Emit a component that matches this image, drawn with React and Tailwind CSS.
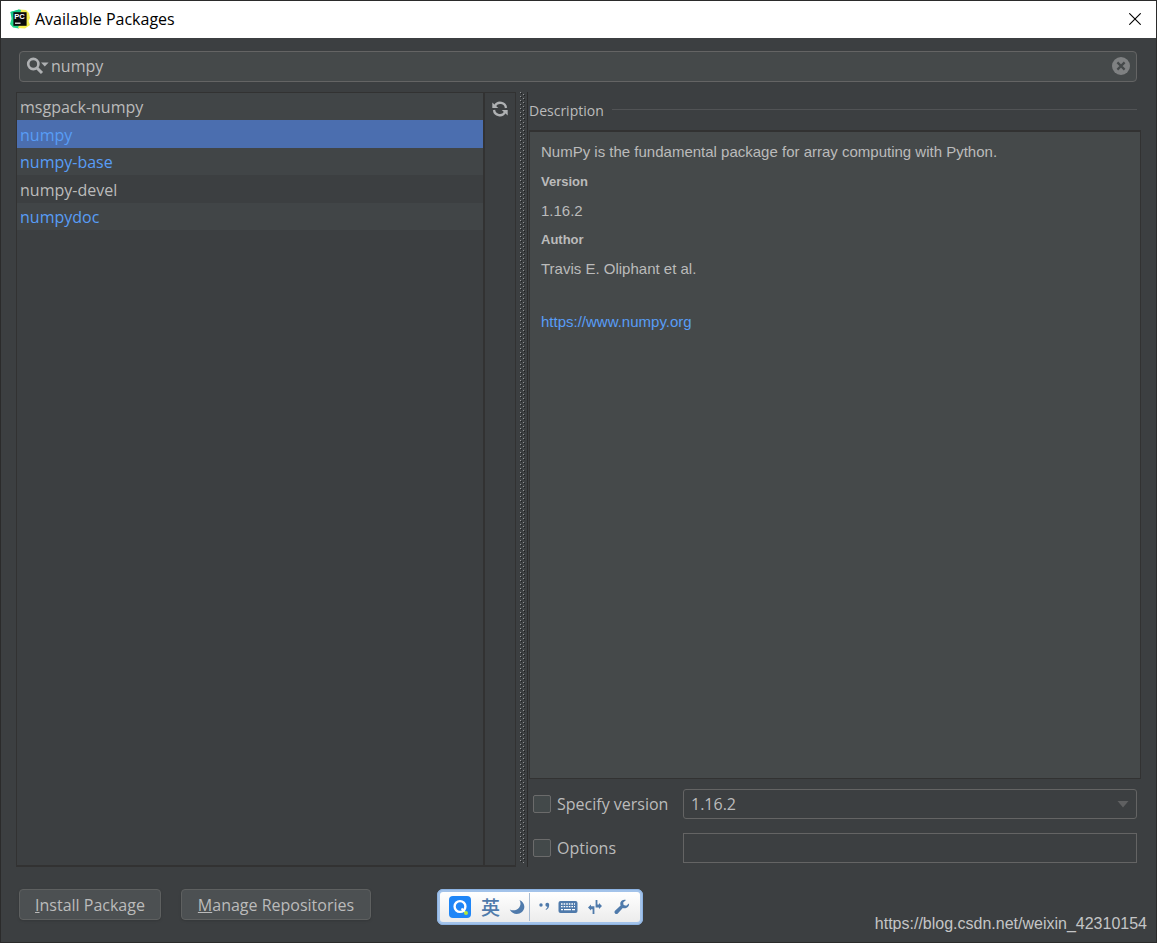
import { useState } from "react";

const packages = [
  { name: "msgpack-numpy", installed: false },
  { name: "numpy", installed: true },
  { name: "numpy-base", installed: true },
  { name: "numpy-devel", installed: false },
  { name: "numpydoc", installed: true },
];

function PyCharmIcon() {
  return (
    <svg viewBox="0 0 20 20" className="size-5 shrink-0" aria-hidden="true">
      <path d="M0.5 3 L9 0.5 L12 10 L9 19.5 L3 18.5 L0 15 L1.5 10 Z" fill="#21d789" />
      <path d="M9 0.5 L16 1 L19 4 L20 9 L18.5 12 L20 16 L15 19.5 L8 19 L12 8 Z" fill="#f3ee4f" />
      <path d="M0.5 3 L9 0.5 L11 1 L10 5 L2 8 Z" fill="#14c78a" />
      <rect x="3.4" y="3.2" width="13.2" height="13.6" fill="#0a0a0a" />
      <text x="4.2" y="10" fontSize="7.6" fontWeight="700" fontFamily="Liberation Sans, sans-serif" fill="#fff">PC</text>
      <rect x="5" y="13.6" width="5.5" height="1.2" fill="#fff" />
    </svg>
  );
}

function RefreshIcon() {
  return (
    <svg viewBox="0 0 16 16" className="size-4" fill="none" stroke="#afb1b3" strokeWidth="2.3" aria-hidden="true">
      <path d="M3 4.8 A5.9 5.9 0 0 1 14 7" />
      <path d="M13 11.2 A5.9 5.9 0 0 1 2 9" />
      <path d="M0.3 1.4 V7 H6.3 Z" fill="#afb1b3" stroke="none" />
      <path d="M15.7 14.6 V9 H9.7 Z" fill="#afb1b3" stroke="none" />
    </svg>
  );
}

function Splitter() {
  return (
    <svg className="h-full w-[6px]" aria-hidden="true">
      <defs>
        <pattern id="grip" width="6" height="4" patternUnits="userSpaceOnUse">
          <rect x="0" y="0" width="1" height="1" fill="#929496" />
          <rect x="1" y="1" width="1" height="1" fill="#1e2021" />
          <rect x="3" y="2" width="1" height="1" fill="#929496" />
          <rect x="4" y="3" width="1" height="1" fill="#1e2021" />
        </pattern>
      </defs>
      <rect width="6" height="100%" fill="url(#grip)" />
    </svg>
  );
}

function ImeBar() {
  return (
    <div className="flex h-9 w-[206px] items-center rounded-md border-[3px] border-[#a3c3ea] bg-linear-to-b from-white to-[#ececec] pb-px pl-[9px] text-[#4f7aab] outline-1 -outline-offset-1 outline-[#8db3e2]">
      <svg viewBox="0 0 22 22" className="size-[22px]" aria-hidden="true">
        <rect width="22" height="22" rx="4" fill="#1f86f7" />
        <circle cx="11" cy="10.5" r="5.4" fill="none" stroke="#fff" strokeWidth="2.4" />
        <path d="M12.5 12.5 L16 16" stroke="#fff" strokeWidth="2" />
        <circle cx="17" cy="17" r="2" fill="#b4e83a" />
      </svg>
      <span className="ml-[10px] text-[19px] leading-6 font-medium font-['Noto_Sans_CJK_SC',sans-serif]">英</span>
      <svg viewBox="0 0 16 16" className="ml-[9px] size-4" fill="currentColor" aria-hidden="true">
        <path d="M10.5 1 C16 3.5 16.8 9.5 13 13 C9 16.4 3 15.2 0.8 10.5 C3.8 12 7.6 11.6 9.8 9 C11.8 6.6 12 3.6 10.5 1 Z" />
      </svg>
      <span className="ml-1 h-7 w-px bg-[#a9bcd3]" />
      <svg viewBox="0 0 12 12" className="ml-2 size-3" fill="currentColor" aria-hidden="true">
        <circle cx="3" cy="4" r="1.7" />
        <path d="M7.4 3.8 A1.9 1.9 0 1 1 11.2 3.6 C11.2 6.4 10.2 8 8 9 L7.6 8.2 C8.9 7.4 9.4 6.6 9.4 5.8 C8.2 5.9 7.4 5 7.4 3.8 Z" />
      </svg>
      <svg viewBox="0 0 20 14" className="ml-2 h-[14px] w-5" aria-hidden="true">
        <rect x="0.5" y="1" width="19" height="12" rx="2" fill="currentColor" />
        <path d="M3 4 H17 M3 6.6 H17" stroke="#fff" strokeWidth="1.4" strokeDasharray="1.6 1" />
        <path d="M3 9.6 H5 M6 9.6 H13 M14 9.6 H17" stroke="#fff" strokeWidth="1.4" />
      </svg>
      <svg viewBox="0 0 14 16" className="ml-[10px] h-4 w-[14px]" fill="currentColor" aria-hidden="true">
        <path d="M7.6 1 H9.4 V5.4 H11 V4 L14 7 L11 10 V8.4 H7.6 Z" />
        <path d="M6.4 15 H4.6 V10.2 H3 V11.6 L0 8.6 L3 5.6 V7.2 H6.4 Z" />
      </svg>
      <svg viewBox="0 0 16 16" className="ml-3 size-4" aria-hidden="true">
        <path d="M15 4.4 L12.2 6.8 L9.6 6 L9.2 3.6 L12 1 C9.6 0.2 7 1.4 6.4 3.6 C6.1 4.8 6.2 5.6 6.6 6.6 L1 11.8 C0.2 12.6 0.3 13.8 1.1 14.5 C1.9 15.2 3 15.2 3.8 14.4 L8.8 9 C11.6 10 15.6 8 15 4.4 Z" fill="currentColor" />
      </svg>
    </div>
  );
}

export default function App() {
  const [query, setQuery] = useState("numpy");
  const [selected, setSelected] = useState("numpy");

  return (
    <div className="flex min-h-screen flex-col border border-[#2b2b2b] bg-[#3c3f41] font-['Open_Sans',sans-serif] text-base text-[#bbbbbb]">
      <header className="flex h-[37px] items-center bg-white pr-[15px] pb-px pl-[9px] text-black">
        <PyCharmIcon />
        <h1 className="ml-[5px] flex-1 text-base leading-5">Available Packages</h1>
        <button type="button" aria-label="Close">
          <svg viewBox="0 0 12 12" className="size-3" stroke="#000" strokeWidth="1.1" aria-hidden="true">
            <path d="M0.3 0.3 L11.7 11.7 M11.7 0.3 L0.3 11.7" />
          </svg>
        </button>
      </header>

      <main className="flex flex-1 flex-col px-[15px]">
        <div className="mt-[13px] mr-1 ml-[3px] flex h-[31px] items-center rounded-[4px] border border-[#646464] bg-[#45494a] pr-[6px] pb-px pl-[6px]">
          <svg viewBox="0 0 24 18" className="h-[18px] w-6" aria-hidden="true">
            <circle cx="7.3" cy="7" r="5.1" fill="none" stroke="#afb1b3" strokeWidth="2.6" />
            <path d="M11 11 L16 16" stroke="#afb1b3" strokeWidth="3" />
            <path d="M15 5.5 H22.6 L18.8 9.5 Z" fill="#afb1b3" />
          </svg>
          <input
            type="text"
            aria-label="Search packages"
            value={query}
            onChange={(e) => setQuery(e.target.value)}
            className="ml-px min-w-0 flex-1 bg-transparent leading-5 outline-none"
          />
          <button type="button" aria-label="Clear search" onClick={() => setQuery("")}>
            <svg viewBox="0 0 18 18" className="size-[18px]" aria-hidden="true">
              <circle cx="9" cy="9" r="9" fill="#7f8182" />
              <path d="M5.4 5.4 L12.6 12.6 M12.6 5.4 L5.4 12.6" stroke="#45494a" strokeWidth="2.2" />
            </svg>
          </button>
        </div>

        <div className="mt-[10px] flex flex-1">
          <div className="flex w-[500px] shrink-0 border border-b-2 border-[#323232]">
            <ul className="flex-1">
              {packages.map((p) => (
                <li key={p.name} className="odd:h-[27px] odd:bg-[#414547] even:h-7">
                  <button
                    type="button"
                    onClick={() => setSelected(p.name)}
                    className={`flex size-full items-center px-[3px] pt-px leading-5 ${
                      selected === p.name ? "bg-[#4b6eaf]" : ""
                    } ${p.installed ? "text-[#589df6]" : ""}`}
                  >
                    {p.name}
                  </button>
                </li>
              ))}
            </ul>
            <div className="flex w-8 flex-col items-center border-l-2 border-[#323232] pt-2">
              <button type="button" aria-label="Reload list of packages">
                <RefreshIcon />
              </button>
            </div>
          </div>

          <div className="flex w-3 shrink-0 justify-end border-r border-[#2b2b2b] pr-px pb-1">
            <Splitter />
          </div>

          <section className="flex min-w-0 flex-1 flex-col">
            <div className="flex h-[38px] items-center gap-2 pr-1 pb-px pl-px">
              <h2 className="text-sm leading-5">Description</h2>
              <span className="mb-[2px] h-px flex-1 bg-[#515355]" />
            </div>
            <div className="ml-px flex-1 border border-t-2 border-[#323232] bg-[#45494a] px-[11px] pt-[10px] font-['Liberation_Sans',sans-serif] text-[15px] leading-5">
              <p>NumPy is the fundamental package for array computing with Python.</p>
              <h3 className="mt-[10px] text-[13px] leading-5 font-bold">Version</h3>
              <p className="mt-[9px]">1.16.2</p>
              <h3 className="mt-[9px] text-[13px] leading-5 font-bold">Author</h3>
              <p className="mt-[9px]">Travis E. Oliphant et al.</p>
              <p className="mt-[33px]">
                <a href="https://www.numpy.org" className="text-[#589df6]">https://www.numpy.org</a>
              </p>
            </div>

            <div className="grid grid-cols-[150px_1fr] gap-y-[14px] pt-[10px] pr-1 pb-1 pl-[5px]">
              <label className="flex items-center gap-[6px] leading-5">
                <input type="checkbox" className="size-[18px] appearance-none rounded-[2px] border border-[#6b6b6b] bg-[#43494a]" />
                Specify version
              </label>
              <div className="relative">
                <select
                  aria-label="Version"
                  className="h-[30px] w-full appearance-none rounded-[3px] border border-[#646464] bg-[#3c3f41] px-[7px] leading-5"
                >
                  <option>1.16.2</option>
                </select>
                <svg viewBox="0 0 12 7" className="pointer-events-none absolute top-3 right-2 h-[7px] w-3" aria-hidden="true">
                  <path d="M0.5 0 H11.5 L6 6.5 Z" fill="#5f6061" />
                </svg>
              </div>
              <label className="flex items-center gap-[6px] leading-5">
                <input type="checkbox" className="size-[18px] appearance-none rounded-[2px] border border-[#6b6b6b] bg-[#43494a]" />
                Options
              </label>
              <input type="text" aria-label="Options value" className="h-[30px] min-w-0 border border-[#646464] bg-[#3c3f41] px-2 outline-none" />
            </div>
          </section>
        </div>
      </main>

      <footer className="flex h-[75px] items-start pt-[22px] pr-[9px] pl-[18px]">
        <button type="button" className="h-[31px] w-[142px] rounded-[4px] border border-[#5e6060] bg-[#4c5052] leading-5 shadow-sm">
          <u>I</u>nstall Package
        </button>
        <button type="button" className="ml-5 h-[31px] w-[190px] rounded-[4px] border border-[#5e6060] bg-[#4c5052] leading-5 shadow-sm">
          <u>M</u>anage Repositories
        </button>
        <div className="ml-[66px]">
          <ImeBar />
        </div>
        <p className="mt-[25px] ml-auto font-['Liberation_Sans',sans-serif] text-base leading-5 text-[#c4c5c6]">
          https://blog.csdn.net/weixin_42310154
        </p>
      </footer>
    </div>
  );
}
